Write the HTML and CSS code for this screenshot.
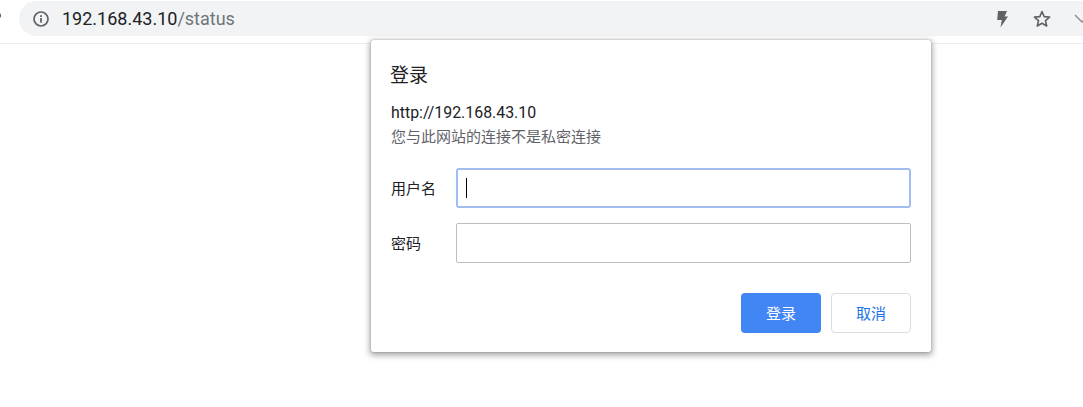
FILE: index.html
```html
<!DOCTYPE html>
<html lang="zh-CN">
<head>
    <meta charset="UTF-8">
    <title>192.168.43.10/status</title>
    <link rel="stylesheet" href="styles.css">
</head>
<body>
    <header class="toolbar">
        <span class="reloadEdge"></span>
        <div class="omnibox">
            <svg class="infoIcon" width="16" height="16" viewBox="0 0 16 16">
                <circle cx="8" cy="8" r="7" fill="none" stroke="#5f6368" stroke-width="1.7"/>
                <rect x="7.1" y="7" width="1.8" height="4.6" fill="#5f6368"/>
                <rect x="7.1" y="4.2" width="1.8" height="1.8" fill="#5f6368"/>
            </svg>
            <span class="url">192.168.43.10<span class="urlPath">/status</span></span>
            <div class="omniboxIcons">
                <svg class="boltIcon" width="14" height="18" viewBox="0 0 14 18">
                    <path d="M3 1H12L9.6 6.5H13L5.5 17.5L6.8 10H2.2Z" fill="#5f6368"/>
                </svg>
                <svg width="20" height="20" viewBox="0 0 20 20">
                    <path d="M10 2.6L12.2 7.6L17.6 8.1L13.5 11.7L14.7 17L10 14.2L5.3 17L6.5 11.7L2.4 8.1L7.8 7.6Z" fill="none" stroke="#5f6368" stroke-width="1.6" stroke-linejoin="round"/>
                </svg>
                <svg width="20" height="20" viewBox="0 0 20 20">
                    <path d="M2 6L9 13L16 6" fill="none" stroke="#8a8d91" stroke-width="1.4"/>
                </svg>
            </div>
        </div>
    </header>

    <div class="dialog">
        <h1 class="dialogTitle">登录</h1>
        <p class="origin">http://192.168.43.10</p>
        <p class="notice">您与此网站的连接不是私密连接</p>
        <div class="field">
            <label class="fieldLabel">用户名</label>
            <div class="fieldInput focused"><span class="caret"></span></div>
        </div>
        <div class="field">
            <label class="fieldLabel">密码</label>
            <div class="fieldInput"></div>
        </div>
        <div class="actions">
            <button class="primary">登录</button>
            <button class="secondary">取消</button>
        </div>
    </div>
</body>
</html>
```

FILE: styles.css
```css
body {
    margin: 0;
    height: 407px;
    overflow: hidden;
    background-color: #fff;
    font-family: "Liberation Sans", "Noto Sans CJK SC", sans-serif;
    color: #202124;
}
.toolbar {
    display: flex;
    height: 42px;
    padding-top: 1px;
    border-bottom: 1px solid #eceded;
}
.reloadEdge {
    position: absolute;
    left: -3px;
    top: 13px;
    width: 4px;
    height: 5px;
    border-radius: 2px;
    background-color: #5f6368;
}
.omnibox {
    display: flex;
    align-items: center;
    height: 35px;
    flex: 1;
    margin-left: 19px;
    margin-right: -10px;
    padding-left: 14px;
    border-radius: 18px 0 0 18px;
    background-color: #f1f3f4;
}
.infoIcon {
    flex: none;
}
.url {
    margin-left: 13px;
    font-family: Roboto, "Liberation Sans", sans-serif;
    font-size: 18px;
    color: #202124;
}
.urlPath {
    color: #70757a;
}
.omniboxIcons {
    display: flex;
    align-items: center;
    margin-left: auto;
    gap: 21px;
}
.boltIcon {
    margin-right: 2px;
}
.dialog {
    position: absolute;
    left: 371px;
    top: 40px;
    width: 560px;
    height: 312px;
    box-sizing: border-box;
    padding: 24px 20px 20px;
    background-color: #fff;
    border-radius: 2px;
    box-shadow: 0 0 1px rgba(0, 0, 0, 0.5), 0 2px 6px 1px rgba(0, 0, 0, 0.38);
}
.dialogTitle {
    margin: 0 0 0 -1px;
    font-size: 19px;
    line-height: 24px;
    font-weight: normal;
    color: #202124;
}
.origin {
    margin: 15px 0 0;
    font-family: Roboto, "Liberation Sans", sans-serif;
    font-size: 15.9px;
    line-height: 20px;
    color: #202124;
}
.notice {
    margin: 5px 0 0;
    font-size: 15px;
    line-height: 18px;
    color: #5f6368;
}
.field {
    display: flex;
    align-items: center;
    margin-bottom: 15px;
}
.notice + .field {
    margin-top: 22px;
}
.fieldLabel {
    width: 65px;
    flex: none;
    padding-bottom: 2px;
    font-size: 15px;
    color: #202124;
}
.fieldInput {
    flex: 1;
    display: flex;
    align-items: center;
    height: 40px;
    box-sizing: border-box;
    padding-left: 10px;
    border: 1px solid #bdbdbd;
    border-radius: 2px;
}
.focused {
    border: 2px solid #a1bcef;
    border-radius: 3px;
    padding-left: 8px;
}
.caret {
    width: 1px;
    height: 20px;
    background-color: #000;
}
.actions {
    display: flex;
    justify-content: flex-end;
    gap: 10px;
    margin-top: 30px;
}
button {
    width: 80px;
    height: 40px;
    padding: 0 0 2px;
    font-family: "Liberation Sans", "Noto Sans CJK SC", sans-serif;
    font-size: 15px;
    border-radius: 4px;
}
.primary {
    border: none;
    background-color: #4285f4;
    color: #fff;
}
.secondary {
    border: 1px solid #dadce0;
    background-color: #fff;
    color: #1a73e8;
}
```
